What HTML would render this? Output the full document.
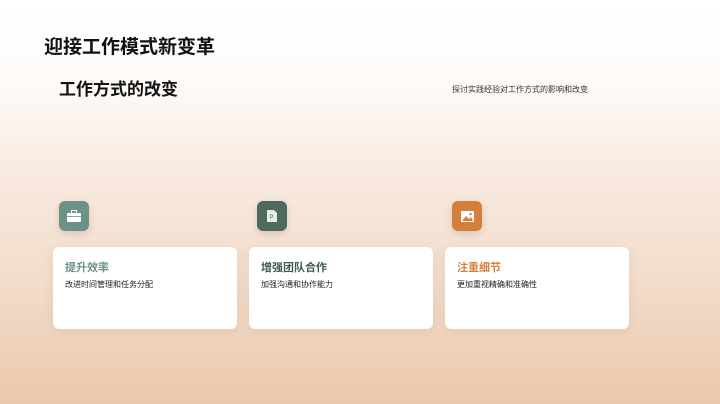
<!DOCTYPE html>
<html><head><meta charset="utf-8"><style>
*{margin:0;padding:0;box-sizing:border-box}
body{width:720px;height:404px;overflow:hidden;font-family:"Liberation Sans","Noto Sans CJK SC",sans-serif;background:linear-gradient(180deg,#ffffff 0%,#fefcfa 18%,#f8e9de 45%,#f2dccb 70%,#ebc8ac 100%);position:relative}
.a{position:absolute}
h1{position:absolute;left:44px;top:32px;font-size:19px;font-weight:bold;color:#111}
h2{position:absolute;left:59px;top:75px;font-size:17px;font-weight:bold;color:#111}
.sub{left:452px;top:84px;font-size:8px;color:#333}
.ic{width:30px;height:30px;border-radius:6px;top:201px;box-shadow:0 3px 8px rgba(0,0,0,.12);display:flex;align-items:center;justify-content:center}
.card{top:247px;width:184px;height:82px;background:#fff;border-radius:6px;box-shadow:0 2px 10px rgba(150,100,60,.12);padding:14px 0 0 12px}
.card b{display:block;font-size:11px;line-height:14px;margin-bottom:-1px}
.card span{font-size:8px;color:#222;line-height:12px}
</style></head><body>
<h1>迎接工作模式新变革</h1>
<h2>工作方式的改变</h2>
<div class="a sub">探讨实践经验对工作方式的影响和改变</div>

<div class="a ic" style="left:59px;background:#6b9285"><svg width="14" height="12" viewBox="0 0 14 12"><rect x="0" y="3" width="14" height="9" rx="1" fill="#fff"/><rect x="4.5" y="0.5" width="5" height="3" fill="none" stroke="#fff" stroke-width="1"/><line x1="0" y1="6.5" x2="14" y2="6.5" stroke="#6b9285" stroke-width=".8"/></svg></div>
<div class="a ic" style="left:257px;background:#4e6a5f"><svg width="10" height="12" viewBox="0 0 10 12"><path d="M0 0H7L10 3V12H0Z" fill="#e8eeeb"/><text x="2.5" y="9" font-size="6" fill="#4e6a5f" font-family="Liberation Sans">P</text></svg></div>
<div class="a ic" style="left:452px;background:#d47f3c"><svg width="13" height="11" viewBox="0 0 13 11"><rect width="13" height="11" rx="1" fill="#fff"/><path d="M1 10L5 5L8 8L10 6L12 10Z" fill="#d47f3c"/><circle cx="9.5" cy="3" r="1.2" fill="#d47f3c"/></svg></div>

<div class="a card" style="left:53px"><b style="color:#6b9285">提升效率</b><span>改进时间管理和任务分配</span></div>
<div class="a card" style="left:249px"><b style="color:#3f5a50">增强团队合作</b><span>加强沟通和协作能力</span></div>
<div class="a card" style="left:445px"><b style="color:#d47f3c">注重细节</b><span>更加重视精确和准确性</span></div>
</body></html>
